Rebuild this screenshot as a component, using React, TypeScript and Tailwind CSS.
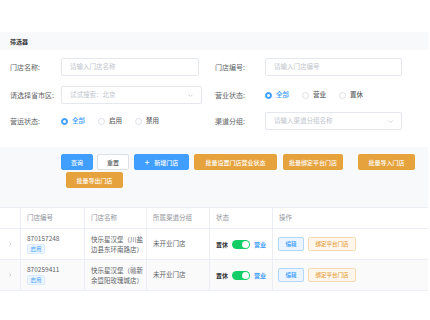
import React from "react";

const font = "font-['Noto_Sans_CJK_SC','Noto_Sans',sans-serif]";

function TextInput({ placeholder, select, width }: { placeholder: string; select?: boolean; width: string }) {
  return (
    <div
      className={`${width} h-[18px] rounded-[2px] border border-[#e4e7ed] bg-white flex items-center justify-between pl-[8px] pr-[7px] text-[6.5px] text-[#c0c4cc]`}
    >
      <span>{placeholder}</span>
      {select && (
        <svg width="7" height="7" viewBox="0 0 10 10" fill="none" stroke="#c0c4cc" strokeWidth="1">
          <path d="M2 3.5 L5 6.5 L8 3.5" />
        </svg>
      )}
    </div>
  );
}

function Radio({ label, checked }: { label: string; checked?: boolean }) {
  return (
    <div className="flex items-center gap-[4px] mr-[13px]">
      <span
        className={`w-[7px] h-[7px] rounded-full border flex items-center justify-center ${
          checked ? "border-[#409eff] bg-[#409eff]" : "border-[#dcdfe6] bg-white"
        }`}
      >
        {checked && <span className="w-[3px] h-[3px] rounded-full bg-white" />}
      </span>
      <span className={`text-[6.5px] font-medium ${checked ? "text-[#409eff]" : "text-[#606266]"}`}>{label}</span>
    </div>
  );
}

function Label({ text, width }: { text: string; width: string }) {
  return <div className={`${width} shrink-0 text-[7px] text-[#606266]`}>{text}</div>;
}

function Btn({ children, kind, cls }: { children: React.ReactNode; kind: "blue" | "white" | "orange"; cls: string }) {
  const styles = {
    blue: "bg-[#409eff] border-[#409eff] text-white",
    white: "bg-white border-[#dcdfe6] text-[#606266]",
    orange: "bg-[#e6a23c] border-[#e6a23c] text-white",
  };
  return (
    <div
      className={`${cls} shrink-0 h-[16px] rounded-[2px] border flex items-center justify-center text-[6px] font-medium ${styles[kind]}`}
    >
      {children}
    </div>
  );
}

const rows = [
  { id: "870157248", name: ["快乐星汉堡（川盐", "边县东环南路店）"], bg: "bg-white" },
  { id: "870259411", name: ["快乐星汉堡（赣新", "余暨阳玫瑰城店）"], bg: "bg-[#fafafa]" },
];

const cols = ["w-[21px]", "w-[64px]", "w-[62px]", "w-[63px]", "w-[63px]", "flex-1"];

export default function App() {
  return (
    <div className={`w-[430px] h-[320px] bg-white overflow-hidden ${font}`}>
      <div className="h-[32px]" />

      <div className="bg-[#f8f9fb] mr-[2px]">
        {/* header */}
        <div className="h-[18px] px-[10px] flex items-center text-[6px] font-bold text-[#303133]">筛选器</div>

        {/* form */}
        <div className="bg-white pt-[8px] pb-[17px]">
          <div className="flex">
            <div className="w-[215px] pl-[10px] flex items-center">
              <Label text="门店名称:" width="w-[51px]" />
              <TextInput placeholder="请输入门店名称" width="w-[138px]" />
            </div>
            <div className="flex items-center">
              <Label text="门店编号:" width="w-[50px]" />
              <TextInput placeholder="请输入门店编号" width="w-[137px]" />
            </div>
          </div>

          <div className="flex mt-[10px]">
            <div className="w-[215px] pl-[10px] flex items-center">
              <Label text="请选择省市区:" width="w-[51px]" />
              <TextInput placeholder="试试搜索：北京" select width="w-[141px]" />
            </div>
            <div className="flex items-center">
              <Label text="营业状态:" width="w-[50px]" />
              <div className="flex items-center">
                <Radio label="全部" checked />
                <Radio label="营业" />
                <Radio label="置休" />
              </div>
            </div>
          </div>

          <div className="flex mt-[8px]">
            <div className="w-[215px] pl-[10px] flex items-center">
              <Label text="营运状态:" width="w-[51px]" />
              <div className="flex items-center">
                <Radio label="全部" checked />
                <Radio label="启用" />
                <Radio label="禁用" />
              </div>
            </div>
            <div className="flex items-center">
              <Label text="渠道分组:" width="w-[50px]" />
              <TextInput placeholder="请输入渠道分组名称" select width="w-[137px]" />
            </div>
          </div>
        </div>

        {/* buttons */}
        <div className="pl-[61px] pr-[10px] pt-[7px] pb-[19px] flex flex-wrap gap-y-[2px]">
          <Btn kind="blue" cls="w-[32px]">查询</Btn>
          <Btn kind="white" cls="w-[32px] ml-[4px]">重置</Btn>
          <Btn kind="blue" cls="w-[55px] ml-[5px]">
            <span className="mr-[5px] text-[8px] leading-none">+</span>新增门店
          </Btn>
          <Btn kind="orange" cls="w-[83px] ml-[5px]">批量设置门店营业状态</Btn>
          <Btn kind="orange" cls="w-[60px] ml-[6px]">批量绑定平台门店</Btn>
          <Btn kind="orange" cls="w-[57px] ml-[15px]">批量导入门店</Btn>
          <Btn kind="orange" cls="w-[57px] ml-[5px]">批量导出门店</Btn>
        </div>
      </div>

      {/* table */}
      <div className="mr-[2px] border-t border-[#ebeef5]">
        <div className="flex h-[21px] bg-white border-b border-[#ebeef5] text-[6.5px] text-[#909399]">
          {["", "门店编号", "门店名称", "所属渠道分组", "状态", "操作"].map((h, i) => (
            <div key={i} className={`${cols[i]} ${i < 5 ? "border-r border-[#ebeef5]" : ""} pl-[6px] flex items-center`}>
              {h}
            </div>
          ))}
        </div>

        {rows.map((r) => (
          <div key={r.id} className={`flex h-[31px] ${r.bg} border-b border-[#ebeef5] text-[6.5px] text-[#606266]`}>
            <div className={`${cols[0]} border-r border-[#ebeef5] flex items-center justify-center`}>
              <svg width="6" height="6" viewBox="0 0 10 10" fill="none" stroke="#a8abb2" strokeWidth="1">
                <path d="M4 2.5 L6.5 5 L4 7.5" />
              </svg>
            </div>
            <div className={`${cols[1]} border-r border-[#ebeef5] pl-[6px] flex flex-col justify-center gap-[2px]`}>
              <span className="leading-[8px]">{r.id}</span>
              <span className="w-[18px] h-[10px] rounded-[2px] bg-[#ecf5ff] border border-[#d9ecff] text-[#409eff] text-[5.5px] flex items-center justify-center">
                启用
              </span>
            </div>
            <div className={`${cols[2]} border-r border-[#ebeef5] pl-[6px] flex flex-col justify-center leading-[10px] text-[6.5px]`}>
              <span>{r.name[0]}</span>
              <span>{r.name[1]}</span>
            </div>
            <div className={`${cols[3]} border-r border-[#ebeef5] pl-[6px] flex items-center`}>未开业门店</div>
            <div className={`${cols[4]} border-r border-[#ebeef5] pl-[6px] flex items-center`}>
              <span className="text-[#303133] font-bold text-[6px]">置休</span>
              <span className="ml-[4px] w-[18px] h-[9px] rounded-full bg-[#13ce66] flex items-center justify-end pr-[1px]">
                <span className="w-[7px] h-[7px] rounded-full bg-white" />
              </span>
              <span className="ml-[4px] text-[#409eff] font-bold text-[6px]">营业</span>
            </div>
            <div className={`${cols[5]} pl-[5px] flex items-center`}>
              <span className="w-[26px] h-[14px] rounded-[2px] bg-[#ecf5ff] border border-[#b3d8ff] text-[#409eff] text-[5.5px] font-medium flex items-center justify-center">
                编辑
              </span>
              <span className="ml-[4px] w-[48px] h-[14px] rounded-[2px] bg-[#fdf6ec] border border-[#f5dab1] text-[#e6a23c] text-[5.5px] font-medium flex items-center justify-center">
                绑定平台门店
              </span>
            </div>
          </div>
        ))}
      </div>
    </div>
  );
}
